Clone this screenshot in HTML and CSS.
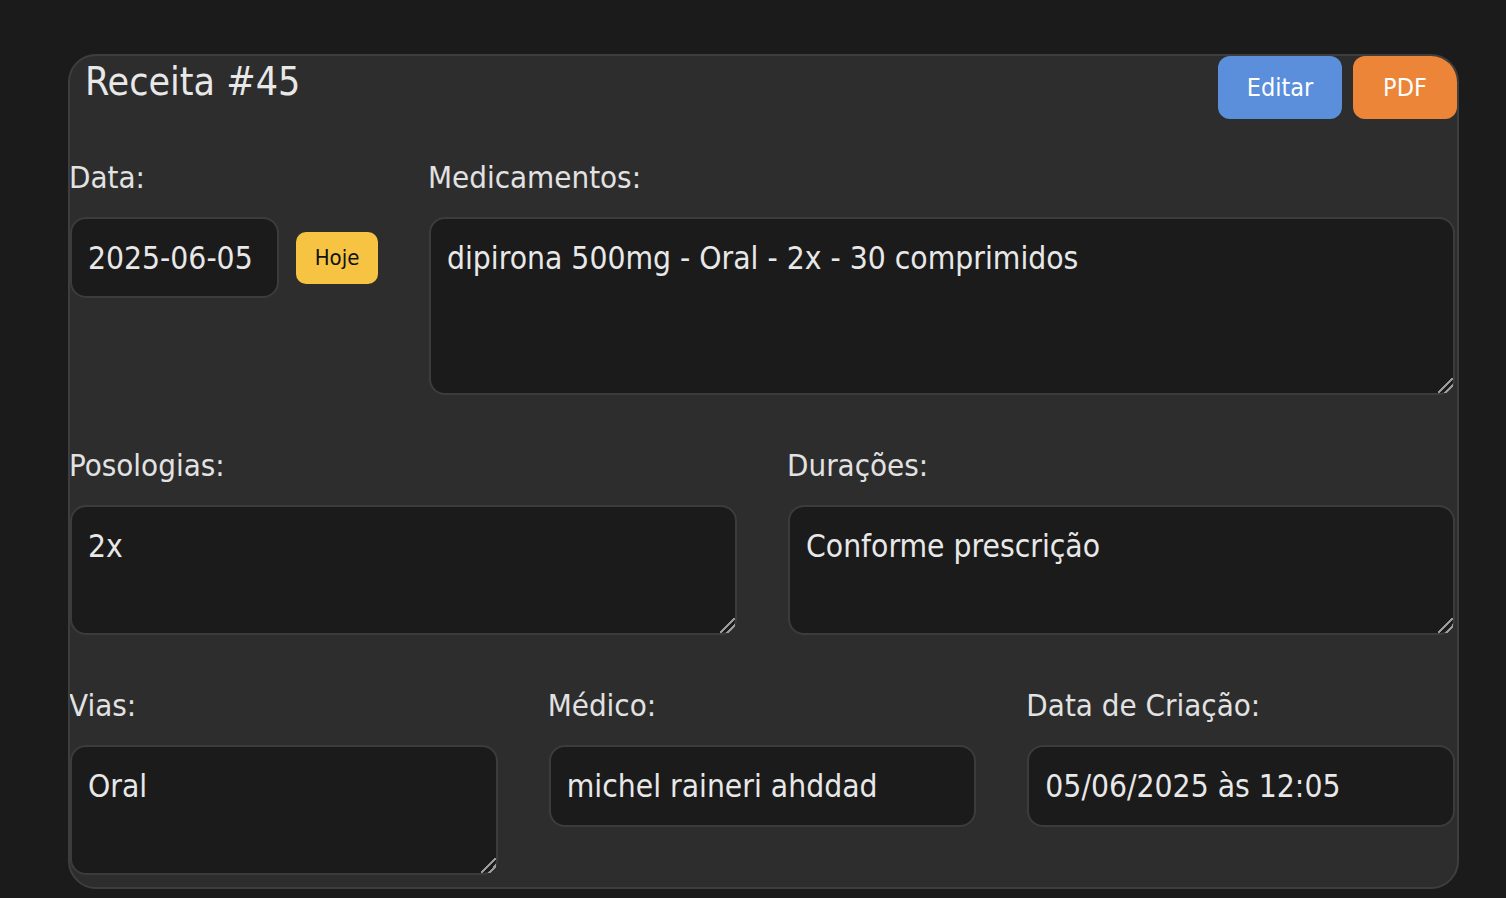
FILE: index.html
```html
<!DOCTYPE html>
<html lang="pt-BR">
<head>
<meta charset="utf-8">
<title>Receita #45</title>
<link rel="stylesheet" href="styles.css">
</head>
<body>
<div class="card">
  <div class="card-header">
    <h2 class="title">Receita #45</h2>
    <div class="actions">
      <button class="btn btn-edit">Editar</button>
      <button class="btn btn-pdf">PDF</button>
    </div>
  </div>
  <div class="form">
    <div class="row row-first">
      <div class="field field-date">
        <label class="label">Data:</label>
        <div class="date-line">
          <input class="input input-date" type="text" value="2025-06-05">
          <button class="btn-today">Hoje</button>
        </div>
      </div>
      <div class="field field-grow">
        <label class="label">Medicamentos:</label>
        <textarea class="textarea ta-tall">dipirona 500mg - Oral - 2x - 30 comprimidos</textarea>
      </div>
    </div>
    <div class="row row-two">
      <div class="field">
        <label class="label">Posologias:</label>
        <textarea class="textarea ta-mid">2x</textarea>
      </div>
      <div class="field">
        <label class="label">Durações:</label>
        <textarea class="textarea ta-mid">Conforme prescrição</textarea>
      </div>
    </div>
    <div class="row row-three">
      <div class="field">
        <label class="label">Vias:</label>
        <textarea class="textarea ta-mid">Oral</textarea>
      </div>
      <div class="field">
        <label class="label">Médico:</label>
        <input class="input" type="text" value="michel raineri ahddad">
      </div>
      <div class="field">
        <label class="label">Data de Criação:</label>
        <input class="input" type="text" value="05/06/2025 às 12:05">
      </div>
    </div>
  </div>
</div>
</body>
</html>
```

FILE: styles.css
```css
* { box-sizing: border-box; }

html, body {
  margin: 0;
  padding: 0;
  background: #1b1b1b;
  height: 100%;
}

body {
  font-family: "DejaVu Sans Condensed", "DejaVu Sans", sans-serif;
  font-stretch: condensed;
  color: #e4e4e4;
  padding-top: 54px;
  padding-left: 68px;
}

.card {
  width: 1391px;
  height: 835px;
  background: #2d2d2d;
  border: 2px solid #3e3e3e;
  border-radius: 28px;
  overflow: hidden;
}

.card-header {
  display: flex;
  justify-content: space-between;
  align-items: flex-start;
  height: 63px;
  margin-bottom: 39px;
}

.title {
  margin: 0;
  padding-left: 15px;
  padding-top: 2px;
  font-size: 39px;
  font-weight: normal;
  line-height: 48px;
  color: #e8e8e8;
}

.actions {
  display: flex;
  gap: 11px;
}

.btn {
  font-family: inherit;
  font-stretch: condensed;
  font-size: 25px;
  color: #ffffff;
  border: none;
  border-radius: 12px;
  height: 63px;
  padding: 0;
}

.btn-edit { width: 124px; background: #5b8edb; }
.btn-pdf { width: 104px; background: #ed8538; }

.form {
  display: flex;
  flex-direction: column;
  gap: 51px;
  padding-right: 2px;
}

.row {
  display: flex;
  gap: 51px;
}

.field {
  display: flex;
  flex-direction: column;
  flex: 1 1 0;
  min-width: 0;
}

.field-date { flex: 0 0 308px; }
.field-grow { flex: 1 1 0; }

.label {
  font-size: 31px;
  line-height: 38px;
  color: #e2e2e2;
  margin-bottom: 21px;
  margin-left: -1px;
}

.date-line {
  display: flex;
  align-items: center;
  gap: 17px;
}

.input, .textarea {
  font-family: inherit;
  font-stretch: condensed;
  font-size: 31.5px;
  color: #e8e8e8;
  background: #1b1b1b;
  border: 2px solid #3c3c3c;
  border-radius: 16px;
  outline: none;
  width: 100%;
  color-scheme: dark;
}

.input {
  height: 82px;
  padding: 0 16px;
}

.input-date {
  width: 209px;
  height: 81px;
  flex: 0 0 209px;
}

.textarea {
  padding: 20px 16px;
  line-height: 38px;
  resize: vertical;
  display: block;
}

.textarea::-webkit-resizer {
  background: linear-gradient(135deg,
    transparent 0%, transparent 46%,
    #9a9a9a 46%, #9a9a9a 56%,
    transparent 56%, transparent 70%,
    #9a9a9a 70%, #9a9a9a 80%,
    transparent 80%);
}

.ta-tall { height: 178px; }
.ta-mid { height: 130px; }

.btn-today {
  font-family: inherit;
  font-stretch: condensed;
  font-size: 22px;
  color: #111111;
  background: #f6c343;
  border: none;
  border-radius: 10px;
  width: 84px;
  height: 52px;
  padding: 0;
}
```
